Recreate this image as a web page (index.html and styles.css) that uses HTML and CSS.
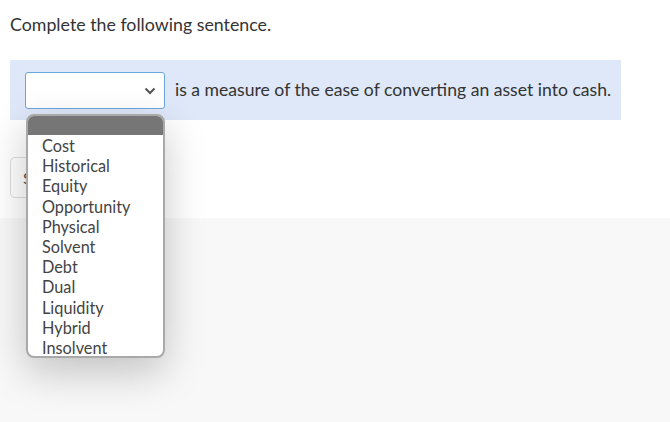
FILE: index.html
```html
<!DOCTYPE html>
<html lang="en">
<head>
  <meta charset="UTF-8">
  <title>Complete the sentence</title>
  <link rel="stylesheet" href="styles.css">
</head>
<body>

  <div class="question">
    <p class="prompt">Complete the following sentence.</p>

    <!-- Sentence with dropdown blank -->
    <div class="sentence">
      <div class="blank">
        <svg class="chevron" width="12" height="8" viewBox="0 0 12 8">
          <path d="M1.5 1.5 L6 6 L10.5 1.5" fill="none" stroke="#555" stroke-width="2"/>
        </svg>
      </div>
      <span class="sentence-text">is a measure of the ease of converting an asset into cash.</span>
    </div>

    <button class="submit-btn">Submit</button>
  </div>

  <div class="footer"></div>

  <!-- Open dropdown list -->
  <div class="dropdown">
    <div class="dropdown-head"></div>
    <ul class="options">
      <li>Cost</li>
      <li>Historical</li>
      <li>Equity</li>
      <li>Opportunity</li>
      <li>Physical</li>
      <li>Solvent</li>
      <li>Debt</li>
      <li>Dual</li>
      <li>Liquidity</li>
      <li>Hybrid</li>
      <li>Insolvent</li>
    </ul>
  </div>

</body>
</html>
```

FILE: styles.css
```css
body {
  margin: 0;
  background-color: #ffffff;
  font-family: Lato, 'Open Sans', sans-serif;
  color: #333;
  position: relative;
  height: 422px;
  overflow: hidden;
}

.question {
  padding: 12px 10px 0 10px;
  height: 206px;
}

.prompt {
  margin: 0;
  font-size: 17.8px;
  line-height: 24px;
  color: #333;
}

.sentence {
  margin-top: 24px;
  width: 596px;
  height: 60px;
  padding: 0 0 0 15px;
  background-color: #dee8f8;
  display: flex;
  align-items: center;
  gap: 10px;
}

.blank {
  width: 140px;
  height: 37px;
  background-color: #fff;
  border: 1px solid #6aa6e0;
  border-radius: 3px;
  display: flex;
  justify-content: flex-end;
  align-items: center;
  padding-right: 8px;
  box-sizing: border-box;
}

.chevron {
  margin-top: 1px;
}

.sentence-text {
  font-size: 17.6px;
  color: #333;
  margin-top: -2px;
}

.submit-btn {
  margin-top: 37px;
  height: 41px;
  padding: 0 12px;
  background-color: #fff;
  border: 1px solid #ddd;
  border-radius: 5px;
  font-family: Lato, sans-serif;
  font-size: 16px;
  color: #555;
}

.footer {
  height: 204px;
  background-color: #f8f8f8;
}

.dropdown {
  position: absolute;
  left: 26px;
  top: 114px;
  width: 139px;
  height: 244px;
  box-sizing: border-box;
  background-color: #fff;
  border: 2px solid #a9a9a9;
  border-radius: 8px;
  overflow: hidden;
  box-shadow: 0 14px 40px rgba(0, 0, 0, 0.22);
}

.dropdown-head {
  height: 19px;
  background-color: #767676;
}

.options {
  list-style: none;
  margin: 0;
  padding: 1px 0 0 14px;
}

.options li {
  font-size: 16.3px;
  line-height: 20.2px;
  color: #444;
}
```
